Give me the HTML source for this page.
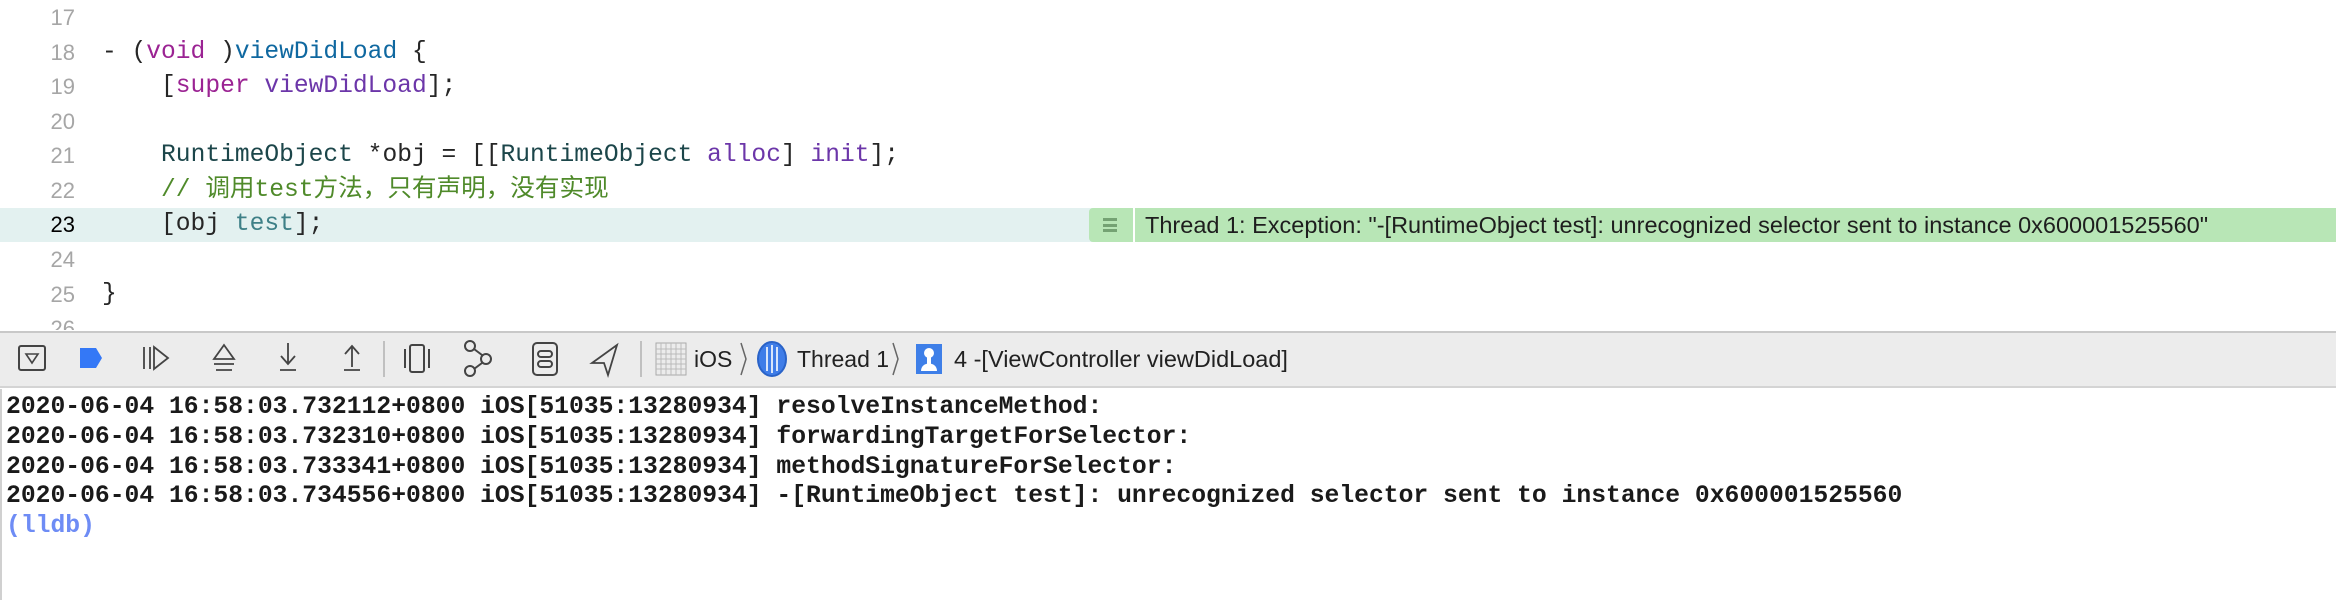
<!DOCTYPE html>
<html><head><meta charset="utf-8"><style>
*{margin:0;padding:0;box-sizing:border-box}
body{width:2336px;height:600px;background:#fff;position:relative;overflow:hidden;font-family:"Liberation Mono","Noto Sans CJK SC",monospace}
.ln{position:absolute;left:0;width:75px;text-align:right;font-size:22px;color:#a6a6a6;height:34.6px;line-height:34.6px;font-family:"Liberation Sans",sans-serif}
.cd{position:absolute;left:102px;font-size:24.6px;height:34.6px;line-height:34.6px;color:#262626;white-space:pre}
.kw{color:#9b2393}.dc{color:#0f68a0}.mc{color:#6c36a9}.cl{color:#1c464a}.ts{color:#3e8087}.cm{color:#4f8a2a;font-family:"Liberation Mono","Noto Sans CJK SC",monospace}
#tb{position:absolute;left:0;top:331px;width:2336px;height:57px;background:#ececec;border-top:2px solid #c8c8c8;border-bottom:2px solid #d4d4d4}
#con{position:absolute;left:0;top:389px;width:2336px;height:211px;border-left:2px solid #d0d0d0}
.cl2{position:absolute;left:4px;font-size:24.7px;font-weight:bold;color:#1a1a1a;white-space:pre;height:30px;line-height:30px}
</style></head><body>
<div style="position:absolute;left:0;top:208px;width:2336px;height:34px;background:#e3f1f0"></div>
<div class="ln" style="top:1px">17</div>
<div class="ln" style="top:35.6px">18</div>
<div class="ln" style="top:70.2px">19</div>
<div class="ln" style="top:104.8px">20</div>
<div class="ln" style="top:139.4px">21</div>
<div class="ln" style="top:174px">22</div>
<div class="ln" style="top:208px;color:#000">23</div>
<div class="ln" style="top:243.2px">24</div>
<div class="ln" style="top:277.8px">25</div>
<div class="ln" style="top:312.4px;height:18px;overflow:hidden">26</div>
<div class="cd" style="top:35.6px">- (<span class="kw">void</span> )<span class="dc">viewDidLoad</span> {</div>
<div class="cd" style="top:70.2px">    [<span class="kw">super</span> <span class="mc">viewDidLoad</span>];</div>
<div class="cd" style="top:139.4px">    <span class="cl">RuntimeObject</span> *obj = [[<span class="cl">RuntimeObject</span> <span class="mc">alloc</span>] <span class="mc">init</span>];</div>
<div class="cd" style="top:174px">    <span class="cm">// 调用test方法，只有声明，没有实现</span></div>
<div class="cd" style="top:208px">    [obj <span class="ts">test</span>];</div>
<div class="cd" style="top:277.8px">}</div>
<div style="position:absolute;left:1089px;top:208px;width:1247px;height:34px;background:#b8e6b6;border-radius:4px 0 0 4px"></div>
<div style="position:absolute;left:1133px;top:208px;width:2px;height:34px;background:#fff"></div>
<div style="position:absolute;left:1103px;top:218px;width:14px;height:14px;border-top:3px solid #74a273;border-bottom:3px solid #74a273"><div style="margin-top:2.5px;height:3px;background:#74a273"></div></div>
<div style="position:absolute;left:1145px;top:208px;height:34px;line-height:34px;font-family:'Liberation Sans',sans-serif;font-size:23.5px;color:#1e1e1e;white-space:pre">Thread 1: Exception: "-[RuntimeObject test]: unrecognized selector sent to instance 0x600001525560"</div>
<div id="tb">
<svg width="2336" height="53" style="position:absolute;left:0;top:0" fill="none" stroke="#444" stroke-width="2">
<rect x="19" y="13" width="26" height="24" rx="2"/><path d="M26 21h12l-6 9z" stroke-width="1.6"/>
<path d="M80 15h16l6 10-6 10h-16z" fill="#3478f6" stroke="none"/>
<path d="M144 14v22M150 14v22M154 14l14 11-14 11z" stroke-width="1.8"/>
<path d="M214 31h20M216 37h16M224 12l-10 14h20z" stroke-width="1.8"/>
<path d="M288 10v20M281 23l7 8 7-8M280 37h16" stroke-width="1.8"/>
<path d="M352 34V14M345 21l7-8 7 8M344 37h16" stroke-width="1.8"/>
<path d="M384 8v36M641 8v36" stroke="#c0c0c0"/>
<rect x="410" y="12" width="14" height="27" rx="2"/><path d="M405 16v19M429 16v19"/>
<circle cx="470" cy="13" r="5"/><circle cx="486" cy="26" r="5"/><circle cx="470" cy="38" r="5"/><path d="M474 16l8 6M474 36l8-6"/>
<rect x="533" y="10" width="24" height="32" rx="4"/><rect x="538" y="18" width="14" height="6" rx="3"/><rect x="538" y="28" width="14" height="6" rx="3"/>
<path d="M617 12l-25 18 12 0 4 12z" stroke-width="1.8"/>
<rect x="656" y="10" width="30" height="32" stroke="#aaa" stroke-width="1"/><path d="M661 10v32M666 10v32M671 10v32M676 10v32M681 10v32M656 16h30M656 21h30M656 26h30M656 31h30M656 36h30" stroke="#bbb" stroke-width="1"/>
<path d="M741 10l5 16-5 16M893 10l5 16-5 16" stroke="#666" stroke-width="1.5"/>
<ellipse cx="772" cy="26" rx="14" ry="17" fill="#3f7de8" stroke="#2a63c8"/><path d="M767 14v24M772 12v28M777 14v24" stroke="#fff" stroke-width="1.6"/>
<rect x="916" y="11" width="26" height="30" fill="#3e7fe8" stroke="none"/><circle cx="929" cy="20" r="5" fill="#fff" stroke="none"/><path d="M921 38c0-10 16-10 16 0z" fill="#fff" stroke="none"/><path d="M927 24h4v10h-4z" fill="#fff" stroke="none"/>
</svg>
<div style="position:absolute;left:694px;top:0;height:53px;line-height:53px;font-family:'Liberation Sans',sans-serif;font-size:23px;color:#222">iOS</div>
<div style="position:absolute;left:797px;top:0;height:53px;line-height:53px;font-family:'Liberation Sans',sans-serif;font-size:23px;color:#222">Thread 1</div>
<div style="position:absolute;left:954px;top:0;height:53px;line-height:53px;font-family:'Liberation Sans',sans-serif;font-size:23.5px;color:#222;white-space:pre">4 -[ViewController viewDidLoad]</div>
</div>
<div id="con">
<div class="cl2" style="top:3px">2020-06-04 16:58:03.732112+0800 iOS[51035:13280934] resolveInstanceMethod:</div>
<div class="cl2" style="top:33px">2020-06-04 16:58:03.732310+0800 iOS[51035:13280934] forwardingTargetForSelector:</div>
<div class="cl2" style="top:63px">2020-06-04 16:58:03.733341+0800 iOS[51035:13280934] methodSignatureForSelector:</div>
<div class="cl2" style="top:92px">2020-06-04 16:58:03.734556+0800 iOS[51035:13280934] -[RuntimeObject test]: unrecognized selector sent to instance 0x600001525560</div>
<div class="cl2" style="top:122px;color:#6e8cf5">(lldb)</div>
</div>
</body></html>
